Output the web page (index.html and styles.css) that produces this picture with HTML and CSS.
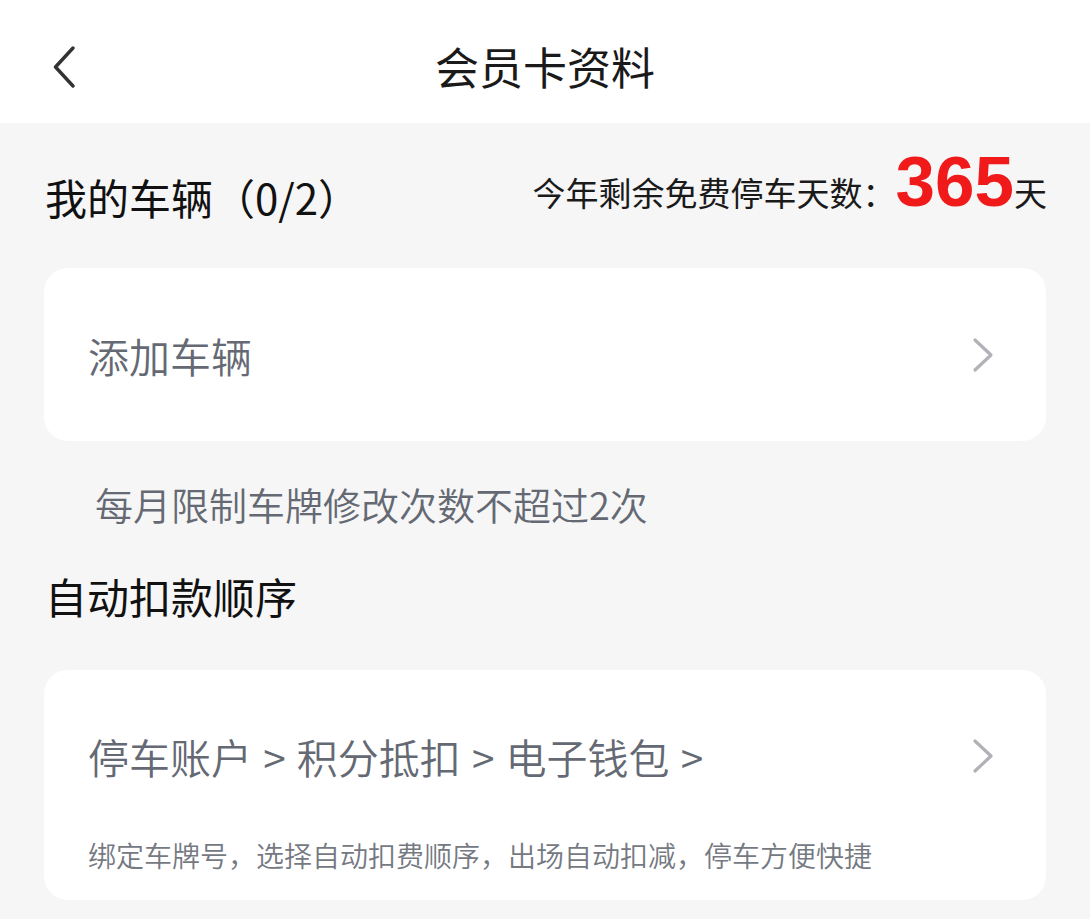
FILE: index.html
```html
<!DOCTYPE html>
<html lang="zh-CN">
<head>
<meta charset="utf-8">
<title>会员卡资料</title>
<link rel="stylesheet" href="styles.css">
</head>
<body>
<header class="topbar">
  <div class="topbar-left">
    <svg class="back-icon" width="24" height="42" viewBox="0 0 24 42" aria-hidden="true">
      <path d="M21 2 L3.5 21 L21 40" fill="none" stroke="#333" stroke-width="3.4" stroke-linecap="round" stroke-linejoin="round"/>
    </svg>
  </div>
  <h1 class="title">会员卡资料</h1>
  <div class="topbar-right"></div>
</header>

<main class="content">
  <div class="section-head">
    <h2 class="heading heading-vehicles">我的车辆（0/2）</h2>
    <div class="stat">今年剩余免费停车天数：<span class="stat-num">365</span>天</div>
  </div>

  <div class="card card-add">
    <span class="item-text">添加车辆</span>
    <svg class="chev" width="24" height="36" viewBox="0 0 24 36" aria-hidden="true">
      <path d="M4 3 L20 18 L4 33" fill="none" stroke="#b0b2b8" stroke-width="3.2" stroke-linecap="round" stroke-linejoin="round"/>
    </svg>
  </div>

  <p class="note">每月限制车牌修改次数不超过2次</p>

  <h2 class="heading heading-order">自动扣款顺序</h2>

  <div class="card card-order">
    <div class="order-row">
      <span class="item-text item-order">停车账户 &gt; 积分抵扣 &gt; 电子钱包 &gt;</span>
      <svg class="chev" width="24" height="36" viewBox="0 0 24 36" aria-hidden="true">
        <path d="M4 3 L20 18 L4 33" fill="none" stroke="#b0b2b8" stroke-width="3.2" stroke-linecap="round" stroke-linejoin="round"/>
      </svg>
    </div>
    <p class="order-desc">绑定车牌号，选择自动扣费顺序，出场自动扣减，停车方便快捷</p>
  </div>
</main>
</body>
</html>
```

FILE: styles.css
```css
* {
  box-sizing: border-box;
}

html, body {
  margin: 0;
  padding: 0;
}

body {
  background: #f6f6f6;
  font-family: "Noto Sans CJK SC", "Noto Sans", sans-serif;
  font-weight: 350;
  color: #111;
  width: 1090px;
  height: 919px;
  overflow: hidden;
}

.topbar {
  background: #ffffff;
  height: 123px;
  display: grid;
  grid-template-columns: 1fr auto 1fr;
  align-items: start;
}

.topbar-left {
  padding: 46px 0 0 52px;
}

.back-icon {
  display: block;
}

.title {
  margin: 0;
  padding-top: 38px;
  font-size: 44px;
  line-height: 56px;
  font-weight: 400;
  color: #1a1a1a;
}

.content {
  padding: 0 44px 0 44px;
}

.section-head {
  height: 145px;
  display: flex;
  justify-content: space-between;
  align-items: flex-start;
}

.heading {
  margin: 0;
  font-size: 42px;
  line-height: 50px;
  font-weight: 400;
  color: #111;
}

.heading-vehicles {
  padding-top: 49px;
  margin-left: 1px;
}

.stat {
  padding-top: 24px;
  font-size: 33px;
  line-height: 70px;
  font-weight: 400;
  color: #1a1a1a;
  margin-right: -1px;
}

.stat-num {
  font-family: "Liberation Sans", Arial, sans-serif;
  font-weight: 700;
  font-size: 71px;
  line-height: 70px;
  color: #f01a1a;
}

.card {
  background: #ffffff;
  border-radius: 24px;
}

.card-add {
  height: 173px;
  display: flex;
  align-items: center;
  justify-content: space-between;
  padding: 0 51px 0 44px;
}

.item-text {
  font-size: 41px;
  line-height: 50px;
  color: #646973;
}

.item-order {
  word-spacing: 2px;
}

.chev {
  display: block;
}

.note {
  margin: 38px 0 0 51px;
  font-size: 38px;
  line-height: 50px;
  color: #646973;
}

.heading-order {
  margin-top: 42px;
  margin-left: 1px;
}

.card-order {
  margin-top: 49px;
  height: 230px;
  padding: 61px 51px 0 44px;
}

.order-row {
  display: flex;
  align-items: center;
  justify-content: space-between;
  height: 50px;
}

.order-desc {
  margin: 56px 0 0 0;
  font-size: 28px;
  line-height: 36px;
  color: #757982;
}
```
